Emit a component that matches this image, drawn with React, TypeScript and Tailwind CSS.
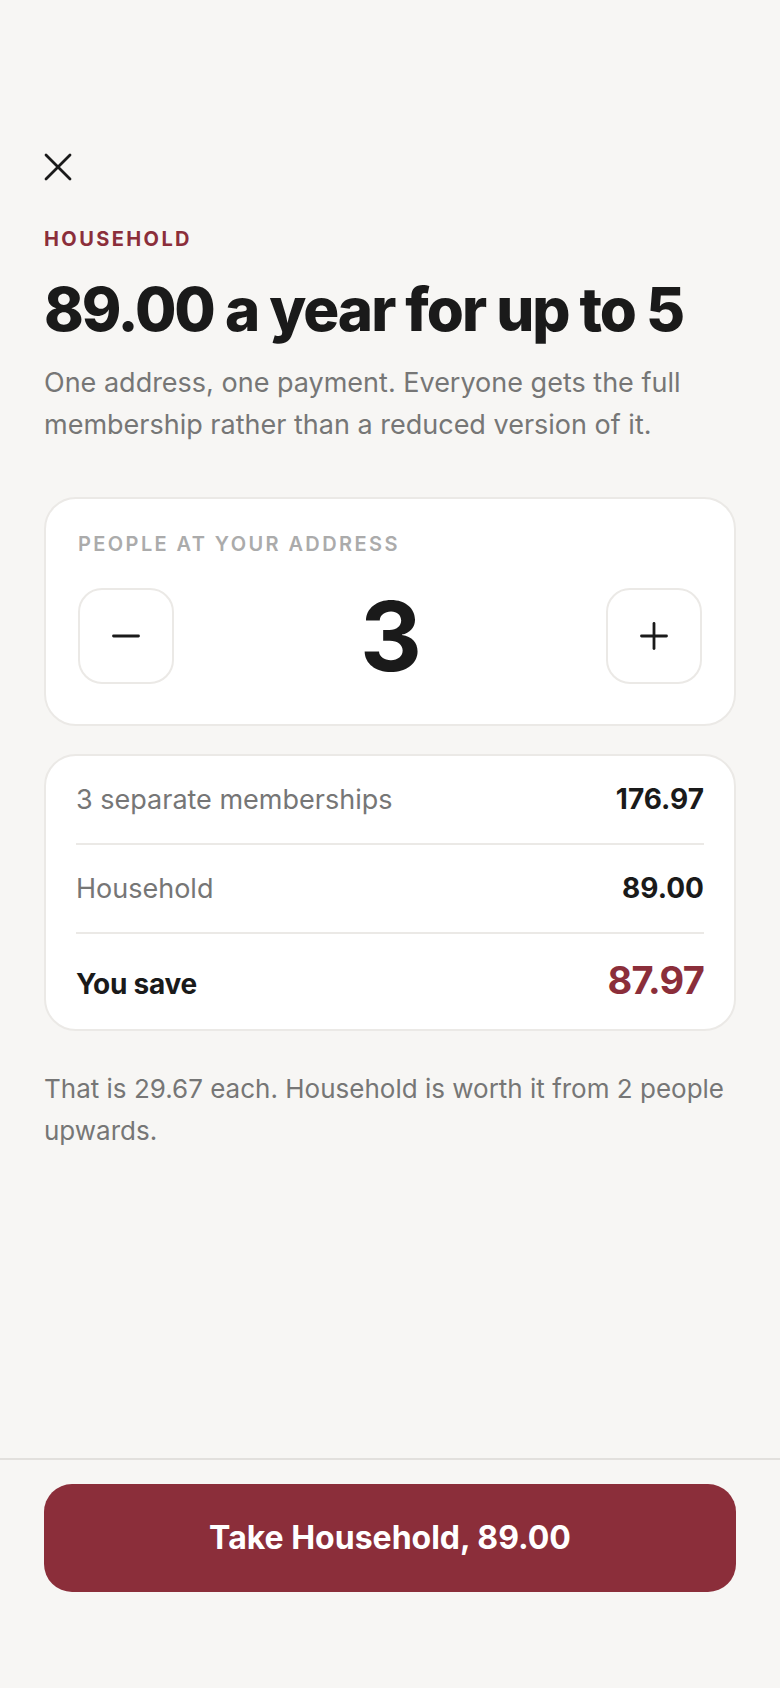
import { useState } from "react";

const PRICE_SINGLE = 58.99;
const PRICE_HOUSEHOLD = 89.0;

export default function App() {
  const [people, setPeople] = useState(3);

  const separate = PRICE_SINGLE * people;
  const save = separate - PRICE_HOUSEHOLD;
  const each = PRICE_HOUSEHOLD / people;

  return (
    <div className="flex min-h-screen flex-col bg-[#f7f6f4] font-['Inter',sans-serif] text-[#1a1a1a]">
      <main className="flex-1 px-11 pt-[153px]">
        {/* Close */}
        <button aria-label="Close" className="block">
          <svg width="28" height="28" viewBox="0 0 28 28" fill="none" stroke="#1a1a1a" strokeWidth="2.8" strokeLinecap="round">
            <path d="M2 2 26 26" />
            <path d="M26 2 2 26" />
          </svg>
        </button>

        {/* Intro */}
        <p className="mt-[43px] text-[20px] font-bold uppercase leading-[30px] tracking-[0.12em] text-[#8b2e3a]">Household</p>
        <h1 className="mt-[22px] text-[60px] font-extrabold leading-[1.1] tracking-[-0.034em]">89.00 a year for up to 5</h1>
        <p className="mt-5 text-[27px] leading-[41.6px] text-[#767676]">
          One address, one payment. Everyone gets the full membership rather than a reduced version of it.
        </p>

        {/* Stepper */}
        <section className="mt-[52px] rounded-[32px] border-2 border-[#ebe9e6] bg-white px-8 pb-8 pt-[30px]">
          <p className="mb-[21px] text-[20px] font-semibold uppercase leading-[30px] tracking-[0.12em] text-[#ababab]">
            People at your address
          </p>
          <div className="flex h-[112px] items-center justify-between">
            <button
              aria-label="Fewer people"
              onClick={() => setPeople((p) => Math.max(1, p - 1))}
              className="flex h-24 w-24 items-center justify-center rounded-3xl border-2 border-[#ebe9e6] bg-white"
            >
              <svg width="28" height="28" viewBox="0 0 28 28" fill="none" stroke="#1a1a1a" strokeWidth="2.8" strokeLinecap="round">
                <path d="M1.5 14h25" />
              </svg>
            </button>
            <span className="text-[96px] font-bold leading-[112px] tracking-[-0.02em]">{people}</span>
            <button
              aria-label="More people"
              onClick={() => setPeople((p) => Math.min(5, p + 1))}
              className="flex h-24 w-24 items-center justify-center rounded-3xl border-2 border-[#ebe9e6] bg-white"
            >
              <svg width="28" height="28" viewBox="0 0 28 28" fill="none" stroke="#1a1a1a" strokeWidth="2.8" strokeLinecap="round">
                <path d="M1.5 14h25" />
                <path d="M14 1.5v25" />
              </svg>
            </button>
          </div>
        </section>

        {/* Comparison */}
        <section className="mt-7 rounded-[32px] border-2 border-[#ebe9e6] bg-white px-[30px]">
          <div className="flex items-baseline justify-between border-b-2 border-[#ebe9e6] py-6 leading-[39px]">
            <span className="text-[27px] text-[#767676]">{`${people} separate memberships`}</span>
            <span className="text-[28px] font-bold">{separate.toFixed(2)}</span>
          </div>
          <div className="flex items-baseline justify-between border-b-2 border-[#ebe9e6] py-6 leading-[39px]">
            <span className="text-[27px] text-[#767676]">Household</span>
            <span className="text-[28px] font-bold">{PRICE_HOUSEHOLD.toFixed(2)}</span>
          </div>
          <div className="flex items-baseline justify-between pb-[22px] pt-6">
            <span className="text-[28px] font-bold leading-[45px] tracking-[-0.01em]">You save</span>
            <span className="text-[38px] font-bold leading-[45px] tracking-[-0.02em] text-[#8b2e3a]">{save.toFixed(2)}</span>
          </div>
        </section>

        <p className="mt-[37px] text-[26px] leading-[41.6px] text-[#767676]">
          {`That is ${each.toFixed(2)} each. Household is worth it from 2 people upwards.`}
        </p>
      </main>

      {/* Footer CTA */}
      <footer className="border-t-2 border-[#e2e0dd] px-11 pb-24 pt-6">
        <button className="flex h-[108px] w-full items-center justify-center rounded-[28px] bg-[#8b2e3a] text-[32px] font-bold text-white">
          {`Take Household, ${PRICE_HOUSEHOLD.toFixed(2)}`}
        </button>
      </footer>
    </div>
  );
}
